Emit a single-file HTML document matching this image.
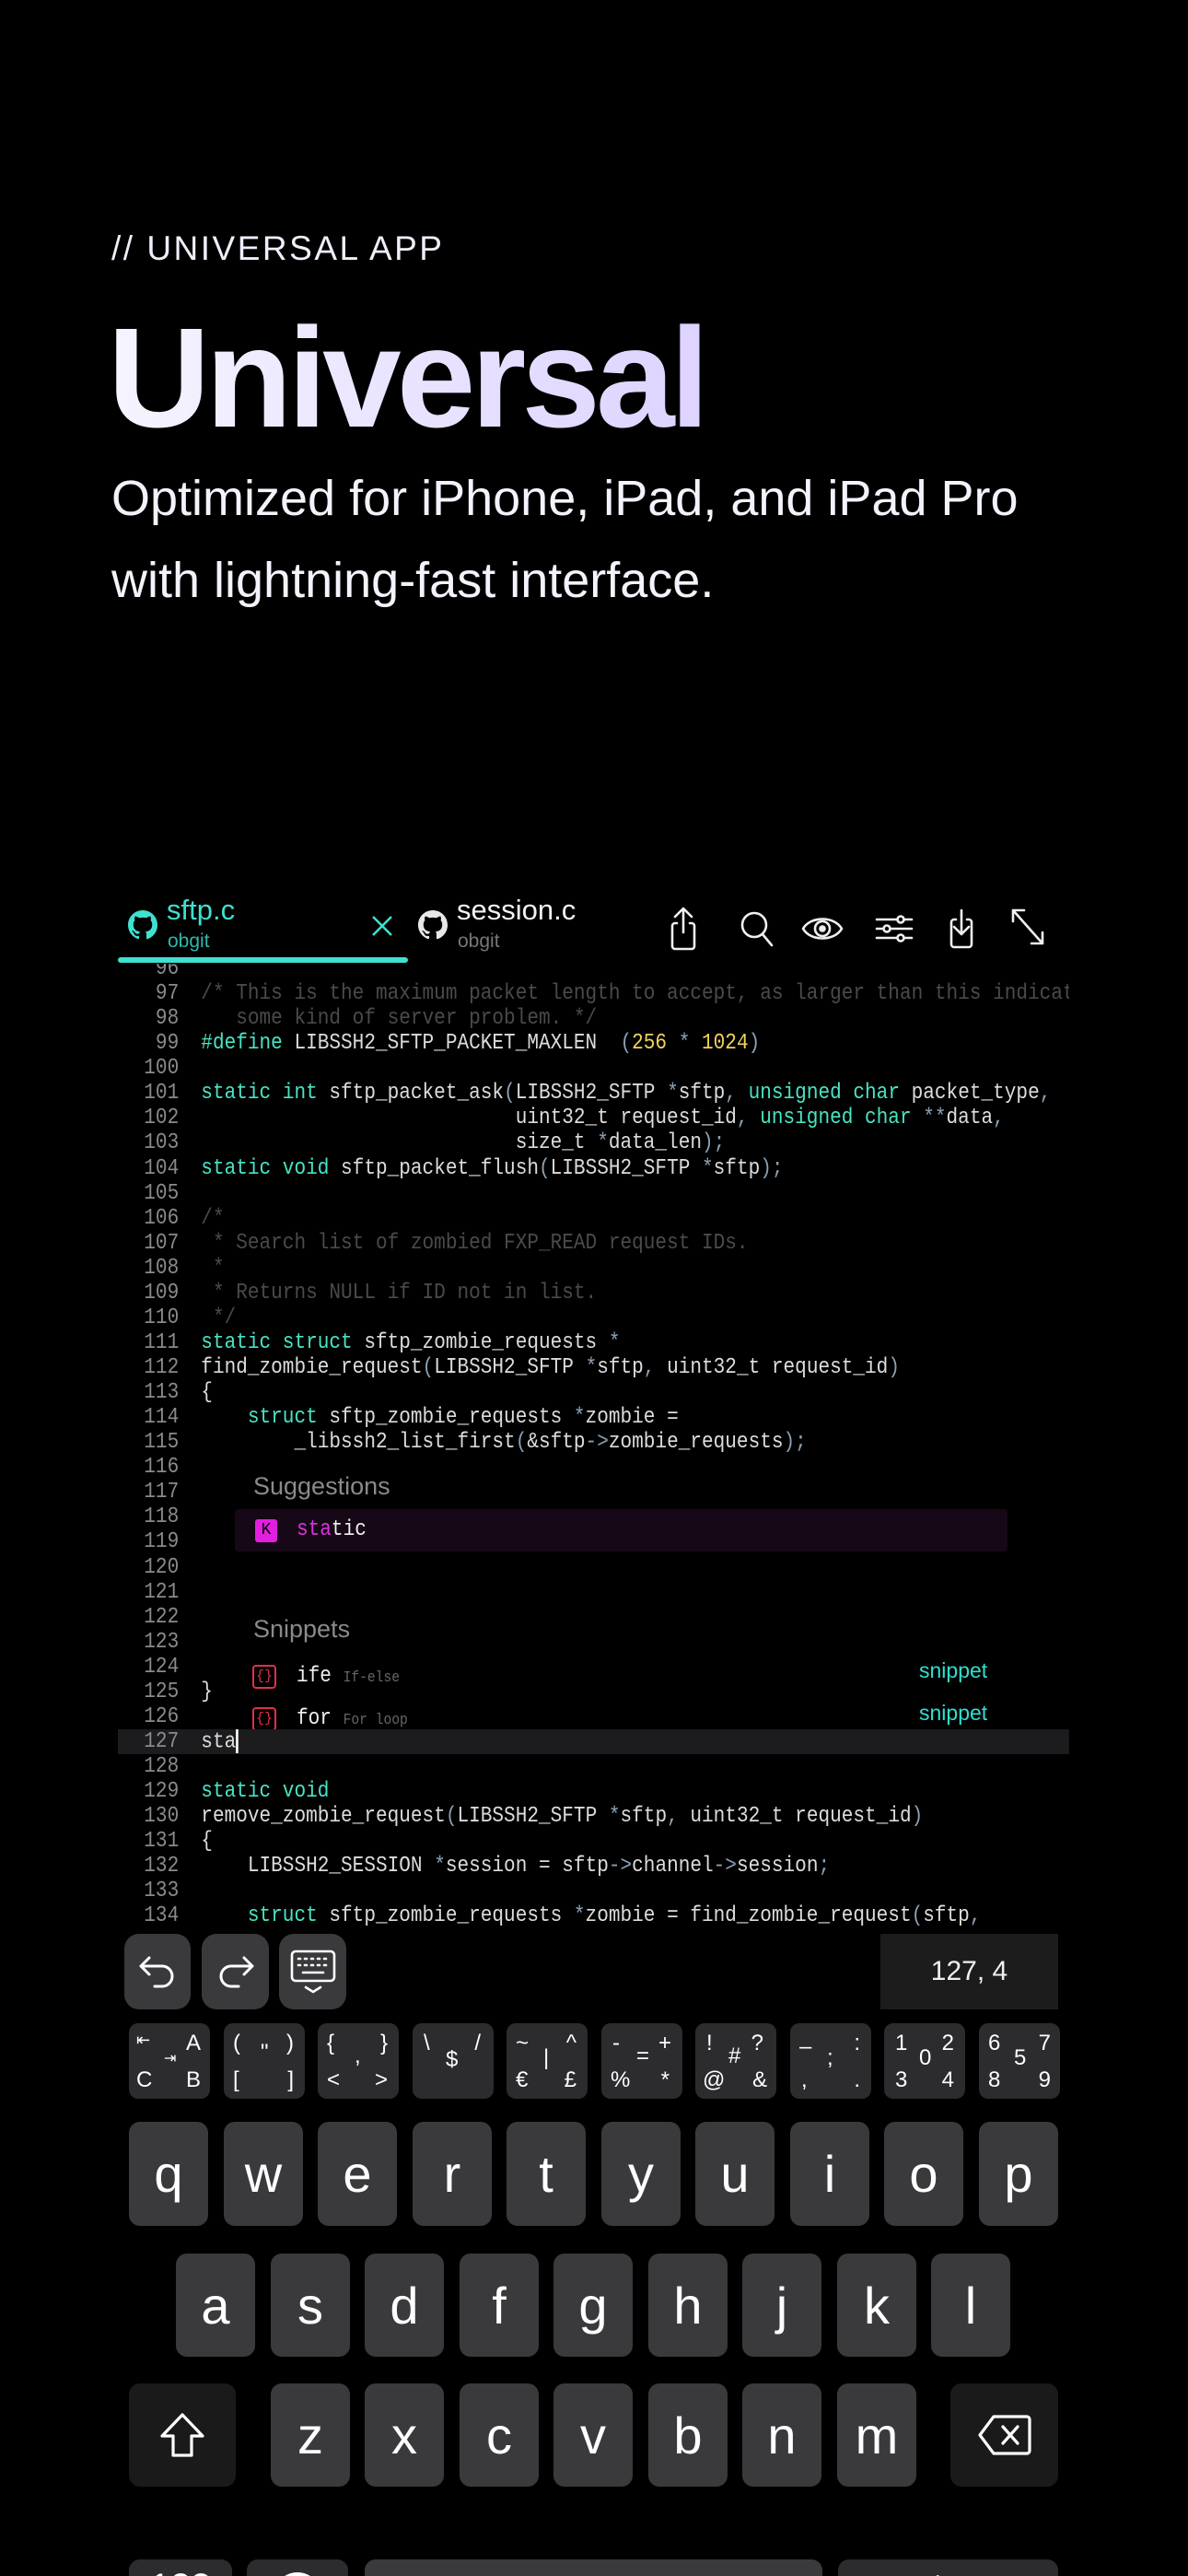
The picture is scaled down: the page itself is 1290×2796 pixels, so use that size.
<!DOCTYPE html>
<html><head><meta charset="utf-8"><style>
*{margin:0;padding:0;box-sizing:border-box}
html,body{width:1290px;height:2796px;background:#000;overflow:hidden}
body{position:relative;font-family:"Liberation Sans",sans-serif;color:#fff}
.abs{position:absolute}
.eyebrow{left:121px;top:249px;font-size:37px;letter-spacing:2.5px;color:#f0eefa;white-space:nowrap}
.title{left:117px;top:318px;font-size:154px;font-weight:bold;letter-spacing:-5px;white-space:nowrap;background:linear-gradient(90deg,#f6f4ff,#ddd3ff);-webkit-background-clip:text;background-clip:text;color:transparent;line-height:1.2}
.sub{left:121px;top:497px;font-size:54px;line-height:89px;color:#f4f2fb;white-space:nowrap}
.tabt{font-size:31px;white-space:nowrap}
.tabs{font-size:21px;white-space:nowrap}
.codewrap{left:128px;top:1046px;width:1033px;height:1050px;overflow:hidden}
.code{position:absolute;left:0;top:0;width:1201px;height:1050px;transform:scaleX(.86);transform-origin:0 0;font-family:"Liberation Mono","DejaVu Sans Mono",monospace;font-size:24.5px;color:#dcdcdc}
.ln{position:absolute;left:0;height:27.08px;line-height:27.08px;white-space:pre;width:1201px}
.ln b{font-weight:normal;display:inline-block;width:77px;text-align:right;color:#8a8a8e;margin-right:28px}
.k{color:#49e3c4}.c{color:#4a4a4e}.n{color:#f2d25e}.p{color:#8aa0b4}
.key{position:absolute;background:#3a3a3c;border-radius:12px;color:#fff;display:flex;align-items:center;justify-content:center;font-size:56px}
.sym{position:absolute;background:#2c2c2e;border-radius:10px;color:#fff;font-size:24px}
.sym span{position:absolute}
.mono{font-family:'Liberation Mono',monospace}
</style></head><body>
<div class="abs eyebrow">// UNIVERSAL APP</div>
<div class="abs title">Universal</div>
<div class="abs sub">Optimized for iPhone, iPad, and iPad Pro<br>with lightning-fast interface.</div>

<svg class="abs" style="left:139px;top:988px" width="32" height="32" viewBox="0 0 16 16"><path fill="#3fe0d0" d="M8 0C3.58 0 0 3.58 0 8c0 3.54 2.29 6.530 5.47 7.59.4.07.55-.17.55-.38v-1.33c-2.23.48-2.7-1.07-2.7-1.07-.36-.92-.89-1.17-.89-1.17-.73-.5.05-.49.05-.49.81.06 1.23.83 1.23.83.72 1.23 1.88.87 2.34.67.07-.52.28-.87.51-1.07-1.78-.2-3.65-.89-3.65-3.95 0-.87.31-1.59.82-2.15-.08-.2-.36-1.02.08-2.12 0 0 .67-.21 2.2.82a7.6 7.6 0 014 0c1.53-1.04 2.2-.82 2.2-.82.44 1.1.16 1.92.08 2.12.51.56.82 1.27.82 2.15 0 3.07-1.87 3.75-3.65 3.95.29.25.54.73.54 1.48v2.2c0 .21.15.46.55.38A8.01 8.01 0 0016 8c0-4.42-3.58-8-8-8z"/></svg>
<div class="abs tabt" style="left:181px;top:970px;color:#3fe0d0">sftp.c</div>
<div class="abs tabs" style="left:182px;top:1010px;color:#2fb8aa">obgit</div>
<svg class="abs" style="left:402px;top:992px" width="26" height="26" viewBox="0 0 26 26"><path d="M3 3L23 23M23 3L3 23" stroke="#3fe0d0" stroke-width="2.5"/></svg>
<svg class="abs" style="left:454px;top:988px" width="32" height="32" viewBox="0 0 16 16"><path fill="#e8e8e8" d="M8 0C3.58 0 0 3.58 0 8c0 3.54 2.29 6.53 5.47 7.59.4.07.55-.17.55-.38v-1.33c-2.230.48-2.7-1.07-2.7-1.07-.36-.92-.89-1.17-.89-1.17-.73-.5.05-.49.05-.49.81.06 1.23.83 1.23.83.72 1.23 1.88.87 2.34.67.07-.52.28-.87.51-1.07-1.78-.2-3.65-.89-3.65-3.95 0-.87.31-1.59.82-2.15-.08-.2-.36-1.02.08-2.12 0 0 .67-.21 2.2.82a7.6 7.6 0 014 0c1.53-1.04 2.2-.82 2.2-.82.44 1.1.16 1.92.08 2.12.51.56.82 1.27.82 2.15 0 3.07-1.87 3.75-3.65 3.95.29.25.54.73.54 1.48v2.2c0 .21.15.46.55.38A8.01 8.01 0 0016 8c0-4.42-3.58-8-8-8z"/></svg>
<div class="abs tabt" style="left:496px;top:970px;color:#f2f2f2">session.c</div>
<div class="abs tabs" style="left:497px;top:1010px;color:#777">obgit</div>
<div class="abs" style="left:128px;top:1039px;width:315px;height:6px;background:#3fe0d0;border-radius:3px"></div>

<svg class="abs" style="left:720px;top:980px" width="440" height="56" viewBox="0 0 440 56" fill="none" stroke="#f0f0f0" stroke-width="2.6" stroke-linecap="round" stroke-linejoin="round">
<path d="M22 6V32M13 15L22 6L31 15M15 22H13a3 3 0 0 0-3 3V47a3 3 0 0 0 3 3H31a3 3 0 0 0 3-3V25a3 3 0 0 0-3-3H29"/>
<circle cx="99" cy="24" r="13"/><path d="M108 34L118 46"/>
<path d="M152 28C160 14 186 14 194 28C186 42 160 42 152 28Z"/><circle cx="173" cy="28" r="8"/><circle cx="173" cy="28" r="2.5" fill="#f0f0f0"/>
<path d="M232 18H270M232 28H270M232 38H270"/><circle cx="258" cy="18" r="3.5" fill="#000"/><circle cx="243" cy="28" r="3.5" fill="#000"/><circle cx="258" cy="38" r="3.5" fill="#000"/>
<path d="M324 8V34M316 26L324 34L332 26M318 18H316a3 3 0 0 0-3 3V45a3 3 0 0 0 3 3H332a3 3 0 0 0 3-3V21a3 3 0 0 0-3-3H330"/>
<path d="M380 8L412 44M380 8V20M380 8H392M412 44V32M412 44H400"/>
</svg>

<div class="abs codewrap"><div class="code">
<div class="ln" style="top:-8px"><b>96</b></div>
<div class="ln" style="top:19px"><b>97</b><span class="c">/* This is the maximum packet length to accept, as larger than this indicat</span></div>
<div class="ln" style="top:46px"><b>98</b><span class="c">   some kind of server problem. */</span></div>
<div class="ln" style="top:73px"><b>99</b><span class="k">#define</span> LIBSSH2_SFTP_PACKET_MAXLEN  <span class="p">(</span><span class="n">256</span> <span class="p">*</span> <span class="n">1024</span><span class="p">)</span></div>
<div class="ln" style="top:100px"><b>100</b></div>
<div class="ln" style="top:127px"><b>101</b><span class="k">static int</span> sftp_packet_ask<span class="p">(</span>LIBSSH2_SFTP <span class="p">*</span>sftp<span class="p">,</span> <span class="k">unsigned char</span> packet_type<span class="p">,</span></div>
<div class="ln" style="top:154px"><b>102</b>                           uint32_t request_id<span class="p">,</span> <span class="k">unsigned char</span> <span class="p">**</span>data<span class="p">,</span></div>
<div class="ln" style="top:181px"><b>103</b>                           size_t <span class="p">*</span>data_len<span class="p">);</span></div>
<div class="ln" style="top:209px"><b>104</b><span class="k">static void</span> sftp_packet_flush<span class="p">(</span>LIBSSH2_SFTP <span class="p">*</span>sftp<span class="p">);</span></div>
<div class="ln" style="top:236px"><b>105</b></div>
<div class="ln" style="top:263px"><b>106</b><span class="c">/*</span></div>
<div class="ln" style="top:290px"><b>107</b><span class="c"> * Search list of zombied FXP_READ request IDs.</span></div>
<div class="ln" style="top:317px"><b>108</b><span class="c"> *</span></div>
<div class="ln" style="top:344px"><b>109</b><span class="c"> * Returns NULL if ID not in list.</span></div>
<div class="ln" style="top:371px"><b>110</b><span class="c"> */</span></div>
<div class="ln" style="top:398px"><b>111</b><span class="k">static struct</span> sftp_zombie_requests <span class="p">*</span></div>
<div class="ln" style="top:425px"><b>112</b>find_zombie_request<span class="p">(</span>LIBSSH2_SFTP <span class="p">*</span>sftp<span class="p">,</span> uint32_t request_id<span class="p">)</span></div>
<div class="ln" style="top:452px"><b>113</b>{</div>
<div class="ln" style="top:479px"><b>114</b>    <span class="k">struct</span> sftp_zombie_requests <span class="p">*</span>zombie =</div>
<div class="ln" style="top:506px"><b>115</b>        _libssh2_list_first<span class="p">(</span>&amp;sftp<span class="p">-&gt;</span>zombie_requests<span class="p">);</span></div>
<div class="ln" style="top:533px"><b>116</b></div>
<div class="ln" style="top:560px"><b>117</b></div>
<div class="ln" style="top:587px"><b>118</b></div>
<div class="ln" style="top:614px"><b>119</b></div>
<div class="ln" style="top:642px"><b>120</b></div>
<div class="ln" style="top:669px"><b>121</b></div>
<div class="ln" style="top:696px"><b>122</b></div>
<div class="ln" style="top:723px"><b>123</b></div>
<div class="ln" style="top:750px"><b>124</b></div>
<div class="ln" style="top:777px"><b>125</b>}</div>
<div class="ln" style="top:804px"><b>126</b></div>
<div class="ln" style="top:831px;background:#1c1c1e"><b>127</b>sta<span style="display:inline-block;width:3px;height:26px;background:#fff;vertical-align:middle"></span></div>
<div class="ln" style="top:858px"><b>128</b></div>
<div class="ln" style="top:885px"><b>129</b><span class="k">static void</span></div>
<div class="ln" style="top:912px"><b>130</b>remove_zombie_request<span class="p">(</span>LIBSSH2_SFTP <span class="p">*</span>sftp<span class="p">,</span> uint32_t request_id<span class="p">)</span></div>
<div class="ln" style="top:939px"><b>131</b>{</div>
<div class="ln" style="top:966px"><b>132</b>    LIBSSH2_SESSION <span class="p">*</span>session = sftp<span class="p">-&gt;</span>channel<span class="p">-&gt;</span>session<span class="p">;</span></div>
<div class="ln" style="top:993px"><b>133</b></div>
<div class="ln" style="top:1020px"><b>134</b>    <span class="k">struct</span> sftp_zombie_requests <span class="p">*</span>zombie = find_zombie_request<span class="p">(</span>sftp<span class="p">,</span></div>
</div></div>

<div class="abs" style="left:275px;top:1598px;font-size:27px;color:#8a8a8e">Suggestions</div>
<div class="abs" style="left:255px;top:1638px;width:839px;height:46px;background:#160816;border-radius:4px"></div>
<div class="abs mono" style="left:277px;top:1649px;width:24px;height:25px;background:#e21ee0;border-radius:3px;color:#000;font-size:18px;text-align:center;line-height:25px">K</div>
<div class="abs mono" style="left:322px;top:1647px;font-size:24.5px;color:#eee;transform:scaleX(.86);transform-origin:0 0"><span style="color:#e030e0">sta</span>tic</div>
<div class="abs" style="left:275px;top:1753px;font-size:27px;color:#8a8a8e">Snippets</div>
<div class="abs mono" style="left:274px;top:1807px;width:26px;height:26px;border:2.5px solid #e0304a;border-radius:4px;color:#e0304a;font-size:15px;text-align:center;line-height:21px">{}</div>
<div class="abs mono" style="left:322px;top:1806px;font-size:24.5px;color:#eee;transform:scaleX(.86);transform-origin:0 0">ife <span style="font-size:17px;color:#666">If-else</span></div>
<div class="abs" style="left:998px;top:1800px;font-size:23px;color:#2ee0d0">snippet</div>
<div class="abs" style="left:255px;top:1848px;width:839px;height:29px;overflow:hidden">
<div class="abs mono" style="left:19px;top:5px;width:26px;height:26px;border:2.5px solid #e0304a;border-radius:4px;color:#e0304a;font-size:15px;text-align:center;line-height:21px">{}</div>
<div class="abs mono" style="left:67px;top:4px;font-size:24.5px;color:#eee;transform:scaleX(.86);transform-origin:0 0">for <span style="font-size:17px;color:#666">For loop</span></div>
</div>
<div class="abs" style="left:998px;top:1846px;font-size:23px;color:#2ee0d0">snippet</div>

<div class="key" style="left:135px;top:2099px;width:72px;height:82px;border-radius:16px">
<svg width="46" height="46" viewBox="0 0 46 46" fill="none" stroke="#fff" stroke-width="3" stroke-linecap="round" stroke-linejoin="round"><path d="M14 8L5 17L14 26M5 17H28a11 11 0 0 1 0 22H20"/></svg></div>
<div class="key" style="left:219px;top:2099px;width:73px;height:82px;border-radius:16px">
<svg width="46" height="46" viewBox="0 0 46 46" fill="none" stroke="#fff" stroke-width="3" stroke-linecap="round" stroke-linejoin="round"><path d="M32 8L41 17L32 26M41 17H18a11 11 0 0 0 0 22H26"/></svg></div>
<div class="key" style="left:303px;top:2099px;width:73px;height:82px;border-radius:16px">
<svg width="56" height="56" viewBox="0 0 56 56" fill="none" stroke="#fff" stroke-width="2.6" stroke-linecap="round"><rect x="5" y="6" width="46" height="32" rx="4"/><path d="M12 14h2M19 14h2M26 14h2M33 14h2M40 14h2M12 21h2M19 21h2M26 21h2M33 21h2M40 21h2M17 29H39M20 45L28 50L36 45"/></svg></div>
<div class="abs" style="left:956px;top:2099px;width:193px;height:82px;background:#1c1c1c;display:flex;align-items:center;justify-content:center;font-size:30px;color:#f0f0f0">127, 4</div>

<div class="sym" style="left:140px;top:2196px;width:88px;height:82px"><span style="left:8px;top:8px;font-size:18px">⇤</span><span style="right:10px;top:8px">A</span><span style="left:8px;bottom:6px">C</span><span style="left:38px;top:28px;font-size:16px">⇥</span><span style="right:10px;bottom:6px">B</span></div>
<div class="sym" style="left:243px;top:2196px;width:88px;height:82px"><span style="left:10px;top:8px">(</span><span style="left:40px;top:18px">"</span><span style="right:12px;top:8px">)</span><span style="left:10px;bottom:6px">[</span><span style="right:12px;bottom:6px">]</span></div>
<div class="sym" style="left:345px;top:2196px;width:88px;height:82px"><span style="left:10px;top:8px">{</span><span style="left:40px;top:22px">,</span><span style="right:12px;top:8px">}</span><span style="left:10px;bottom:6px">&lt;</span><span style="right:12px;bottom:6px">&gt;</span></div>
<div class="sym" style="left:448px;top:2196px;width:88px;height:82px"><span style="left:12px;top:8px">\</span><span style="left:36px;top:26px">$</span><span style="right:14px;top:8px">/</span></div>
<div class="sym" style="left:550px;top:2196px;width:88px;height:82px"><span style="left:10px;top:8px">~</span><span style="left:40px;top:24px">|</span><span style="right:12px;top:8px">^</span><span style="left:10px;bottom:6px">€</span><span style="right:12px;bottom:6px">£</span></div>
<div class="sym" style="left:653px;top:2196px;width:88px;height:82px"><span style="left:12px;top:8px">-</span><span style="left:38px;top:22px">=</span><span style="right:12px;top:8px">+</span><span style="left:10px;bottom:6px">%</span><span style="right:14px;bottom:6px">*</span></div>
<div class="sym" style="left:755px;top:2196px;width:88px;height:82px"><span style="left:12px;top:8px">!</span><span style="left:36px;top:22px">#</span><span style="right:14px;top:8px">?</span><span style="left:8px;bottom:6px">@</span><span style="right:10px;bottom:6px">&amp;</span></div>
<div class="sym" style="left:858px;top:2196px;width:88px;height:82px"><span style="left:10px;top:12px">–</span><span style="left:40px;top:24px">;</span><span style="right:12px;top:8px">:</span><span style="left:12px;bottom:6px">,</span><span style="right:12px;bottom:6px">.</span></div>
<div class="sym" style="left:960px;top:2196px;width:88px;height:82px"><span style="left:12px;top:8px">1</span><span style="left:38px;top:24px">0</span><span style="right:12px;top:8px">2</span><span style="left:12px;bottom:6px">3</span><span style="right:12px;bottom:6px">4</span></div>
<div class="sym" style="left:1063px;top:2196px;width:88px;height:82px"><span style="left:10px;top:8px">6</span><span style="left:38px;top:24px">5</span><span style="right:10px;top:8px">7</span><span style="left:10px;bottom:6px">8</span><span style="right:10px;bottom:6px">9</span></div>

<div class="key" style="left:140px;top:2303px;width:86px;height:113px">q</div>
<div class="key" style="left:243px;top:2303px;width:86px;height:113px">w</div>
<div class="key" style="left:345px;top:2303px;width:86px;height:113px">e</div>
<div class="key" style="left:448px;top:2303px;width:86px;height:113px">r</div>
<div class="key" style="left:550px;top:2303px;width:86px;height:113px">t</div>
<div class="key" style="left:653px;top:2303px;width:86px;height:113px">y</div>
<div class="key" style="left:755px;top:2303px;width:86px;height:113px">u</div>
<div class="key" style="left:858px;top:2303px;width:86px;height:113px">i</div>
<div class="key" style="left:960px;top:2303px;width:86px;height:113px">o</div>
<div class="key" style="left:1063px;top:2303px;width:86px;height:113px">p</div>

<div class="key" style="left:191px;top:2446px;width:86px;height:112px">a</div>
<div class="key" style="left:294px;top:2446px;width:86px;height:112px">s</div>
<div class="key" style="left:396px;top:2446px;width:86px;height:112px">d</div>
<div class="key" style="left:499px;top:2446px;width:86px;height:112px">f</div>
<div class="key" style="left:601px;top:2446px;width:86px;height:112px">g</div>
<div class="key" style="left:704px;top:2446px;width:86px;height:112px">h</div>
<div class="key" style="left:806px;top:2446px;width:86px;height:112px">j</div>
<div class="key" style="left:909px;top:2446px;width:86px;height:112px">k</div>
<div class="key" style="left:1011px;top:2446px;width:86px;height:112px">l</div>

<div class="key" style="left:140px;top:2587px;width:116px;height:112px;background:#1a1a1a">
<svg width="60" height="60" viewBox="0 0 60 60" fill="none" stroke="#fff" stroke-width="3.2" stroke-linejoin="round"><path d="M30 8L8 31H20V52H40V31H52Z"/></svg></div>
<div class="key" style="left:294px;top:2587px;width:86px;height:112px">z</div>
<div class="key" style="left:396px;top:2587px;width:86px;height:112px">x</div>
<div class="key" style="left:499px;top:2587px;width:86px;height:112px">c</div>
<div class="key" style="left:601px;top:2587px;width:86px;height:112px">v</div>
<div class="key" style="left:704px;top:2587px;width:86px;height:112px">b</div>
<div class="key" style="left:806px;top:2587px;width:86px;height:112px">n</div>
<div class="key" style="left:909px;top:2587px;width:86px;height:112px">m</div>
<div class="key" style="left:1032px;top:2587px;width:117px;height:112px;background:#1a1a1a">
<svg width="64" height="52" viewBox="0 0 64 52" fill="none" stroke="#fff" stroke-width="3.2" stroke-linejoin="round" stroke-linecap="round"><path d="M20 6H56a3 3 0 0 1 3 3V43a3 3 0 0 1-3 3H20L5 26Z"/><path d="M30 17L46 35M46 17L30 35"/></svg></div>

<div class="key" style="left:140px;top:2778px;width:112px;height:60px;align-items:flex-start;padding-top:8px;font-size:40px;background:#2c2c2e">123</div>
<div class="key" style="left:268px;top:2778px;width:110px;height:60px;background:#2c2c2e;align-items:flex-start;padding-top:14px"><div style="width:52px;height:52px;border-radius:50%;background:#fff"></div></div>
<div class="key" style="left:396px;top:2778px;width:497px;height:60px;align-items:flex-start;padding-top:8px;font-size:40px">space</div>
<div class="key" style="left:910px;top:2778px;width:239px;height:60px;align-items:flex-start;padding-top:8px;font-size:40px;background:#2c2c2e">return</div>
</body></html>
